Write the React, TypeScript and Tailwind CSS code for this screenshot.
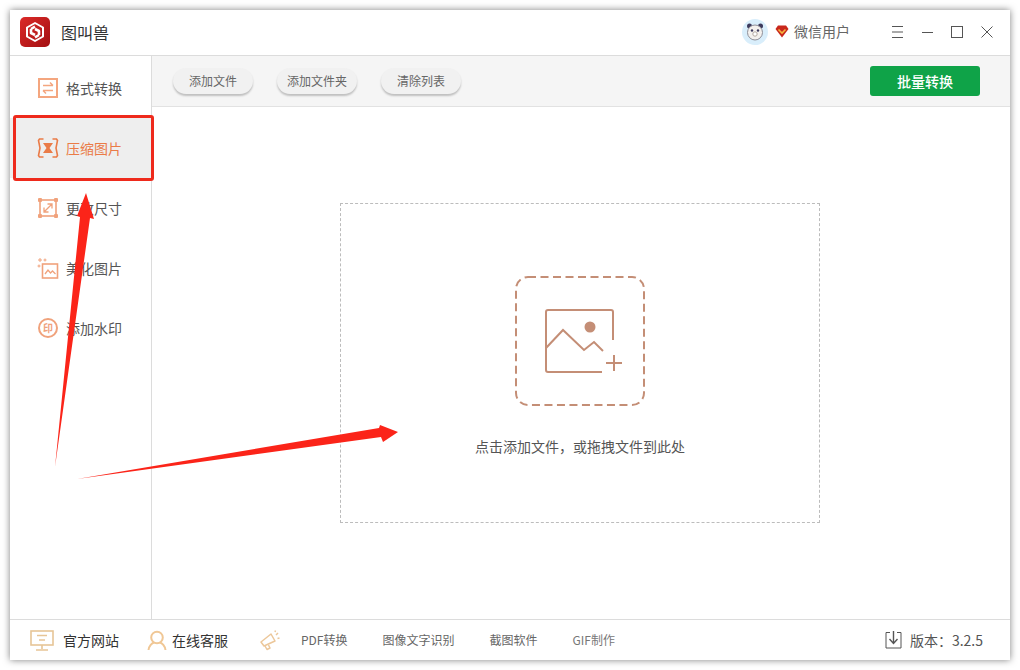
import React from "react";

const cjk = "font-['Noto_Sans_CJK_SC','Noto_Sans',sans-serif]";

function SwapIcon() {
  return (
    <svg width="22" height="22" viewBox="0 0 22 22" fill="none" stroke="#f4a67f" strokeWidth="2">
      <rect x="2" y="2" width="18" height="18" />
      <path d="M6 8.5h10M13 5.5l3 3M16 13.5H6M9 16.5l-3-3" strokeWidth="1.5" />
    </svg>
  );
}
function CompressIcon() {
  return (
    <svg width="22" height="22" viewBox="0 0 22 22" fill="none" stroke="#ea7b47" strokeWidth="1.6">
      <path d="M6.5 2H2.5L1.5 3.5 3 11 1.5 18.5l1 1.5h4M15.5 2h4l1 1.5L19 11l1.5 7.5-1 1.5h-4" />
      <path d="M6 6h10l-3.5 5L16 16H6l3.5-5z" fill="#ea7b47" stroke="none" />
    </svg>
  );
}
function ResizeIcon() {
  return (
    <svg width="22" height="22" viewBox="0 0 22 22" fill="none" stroke="#f0a27c" strokeWidth="1.6">
      <rect x="3" y="3" width="16" height="16" />
      <path d="M7 15l8-8M10.5 7H15v4.5M7 10.5V15h4.5" strokeWidth="1.3" />
      <g fill="#f0a27c" stroke="none">
        <rect x="1" y="1" width="4" height="4" rx="1" />
        <rect x="17" y="1" width="4" height="4" rx="1" />
        <rect x="1" y="17" width="4" height="4" rx="1" />
        <rect x="17" y="17" width="4" height="4" rx="1" />
      </g>
    </svg>
  );
}
function BeautifyIcon() {
  return (
    <svg width="22" height="22" viewBox="0 0 22 22" fill="none" stroke="#f0a27c" strokeWidth="1.3">
      <rect x="5.5" y="7" width="15" height="14" strokeWidth="1.6" />
      <path d="M8 17l3-4 2.5 3 2-2 3 3" />
      <path d="M3 1v4M1 3h4M8 1.5v3M6.5 3h3M2 7.5v3M.5 9h3" strokeWidth="1" />
    </svg>
  );
}
function WatermarkIcon() {
  return (
    <span className="flex h-[20px] w-[20px] items-center justify-center rounded-full border-2 border-[#f0a27c] text-[10px] font-bold leading-none text-[#f0a27c]">
      印
    </span>
  );
}

const side = [
  { label: "格式转换", icon: <SwapIcon /> },
  { label: "压缩图片", icon: <CompressIcon />, active: true },
  { label: "更改尺寸", icon: <ResizeIcon /> },
  { label: "美化图片", icon: <BeautifyIcon /> },
  { label: "添加水印", icon: <WatermarkIcon /> },
];

function Logo() {
  return (
    <div className="flex h-[30px] w-[30px] items-center justify-center rounded-[5px] bg-gradient-to-br from-[#dc2a28] to-[#a30f12]">
      <svg width="22" height="22" viewBox="0 0 22 22" fill="none" stroke="#fff" strokeWidth="2.6" strokeLinejoin="round">
        <path d="M11 2l8 4.5v9L11 20l-8-4.5v-9z" strokeWidth="2" />
        <path d="M7 8l4-2.4M15 14l-4 2.4M7 8v4l4 2M15 14v-4l-4-2" />
      </svg>
    </div>
  );
}

function Panda() {
  return (
    <svg width="26" height="26" viewBox="0 0 26 26">
      <circle cx="13" cy="13" r="13" fill="#d9eefb" />
      <circle cx="7.5" cy="7" r="2.5" fill="#3d3a5c" />
      <circle cx="18.5" cy="7" r="2.5" fill="#3d3a5c" />
      <circle cx="13" cy="13.5" r="7.5" fill="#f4f1ee" stroke="#8f8f98" strokeWidth="1" />
      <circle cx="10" cy="11.5" r="1.2" fill="#3d3a5c" />
      <circle cx="16" cy="11.5" r="1.2" fill="#3d3a5c" />
      <circle cx="13" cy="15" r="2.2" fill="#fff" stroke="#b5a9a0" strokeWidth="1" />
    </svg>
  );
}

function Diamond() {
  return (
    <svg width="14" height="13" viewBox="0 0 14 13">
      <path d="M3 .5h8L13.5 4 7 12.5.5 4z" fill="#c9281c" />
      <path d="M3.5 4.5L7 8l3.5-3.5" fill="none" stroke="#f6b73c" strokeWidth="1.6" />
    </svg>
  );
}

function WindowControls() {
  return (
    <div className="ml-[41px] flex items-center">
      <svg width="13" height="12" viewBox="0 0 13 12" stroke="#555" strokeWidth="1">
        <path d="M1 .5h11M1 6h11M1 11.5h11" />
      </svg>
      <svg className="ml-[17px]" width="13" height="12" viewBox="0 0 13 12" stroke="#555" strokeWidth="1">
        <path d="M1 6.5h11" />
      </svg>
      <svg className="ml-[17px]" width="12" height="12" viewBox="0 0 12 12" fill="none" stroke="#555" strokeWidth="1">
        <rect x=".5" y=".5" width="11" height="11" />
      </svg>
      <svg className="ml-[18px]" width="12" height="12" viewBox="0 0 12 12" stroke="#555" strokeWidth="1">
        <path d="M.5.5l11 11M11.5.5l-11 11" />
      </svg>
    </div>
  );
}

function ToolButton({ children }: { children: React.ReactNode }) {
  return (
    <div className="flex h-[26px] w-[80px] items-center justify-center rounded-full bg-[#f1f1f1] text-[12px] text-[#666] shadow-[0_2px_2px_rgba(0,0,0,0.22)]">
      {children}
    </div>
  );
}

function AddImage() {
  return (
    <svg width="130" height="130" viewBox="0 0 130 130" fill="none" stroke="#c48e76" strokeWidth="2">
      <rect x="1" y="1" width="128" height="128" rx="12" strokeDasharray="8 4.5" />
      <path d="M87 67H98V36a2 2 0 0 0-2-2H33a2 2 0 0 0-2 2v58a2 2 0 0 0 2 2h55" stroke="none" />
      <path d="M98 64V36a2 2 0 0 0-2-2H33a2 2 0 0 0-2 2v58a2 2 0 0 0 2 2h54" />
      <path d="M31 72l17-18 21 20 10-8 9 9" />
      <circle cx="75" cy="51" r="5.5" fill="#c48e76" stroke="none" />
      <path d="M91 87h16M99 79v16" />
    </svg>
  );
}

function Monitor() {
  return (
    <svg width="24" height="21" viewBox="0 0 24 21" fill="none" stroke="#e7c596" strokeWidth="1.6">
      <rect x="1" y="1" width="22" height="14" />
      <path d="M7 5.5h10M9 10h6M12 15v4M6 20h12" />
    </svg>
  );
}
function User() {
  return (
    <svg width="20" height="21" viewBox="0 0 20 21" fill="none" stroke="#f0c795" strokeWidth="2">
      <circle cx="10" cy="7.5" r="5.8" />
      <path d="M1.5 20c.5-4 3.5-7 5.5-7.5M18.5 20c-.5-4-3.5-7-5.5-7.5" />
    </svg>
  );
}
function Megaphone() {
  return (
    <svg width="20" height="21" viewBox="0 0 20 21" fill="none" stroke="#ecc79a" strokeWidth="1.5" strokeLinejoin="round">
      <path d="M1 12l10-8 4 7-11 5z" />
      <path d="M5 16l2 3.5 3-1.5-1.5-3" />
      <path d="M16 5l2-2M15 2l.5-1.5M17.5 8.5l2-.5" />
    </svg>
  );
}
function Download() {
  return (
    <svg width="17" height="18" viewBox="0 0 17 18" fill="none" stroke="#555" strokeWidth="1">
      <path d="M5 1.5H1v15.5h15V1.5h-4" />
      <path d="M8.5 0v12M4.5 8l4 4.5 4-4.5" strokeWidth="1.4" />
    </svg>
  );
}

export default function App() {
  return (
    <div className={`relative h-[670px] w-[1020px] overflow-hidden bg-white p-[10px] ${cjk}`}>
      <div className="flex h-[650px] w-[1000px] flex-col bg-white shadow-[0_0_7px_rgba(0,0,0,0.5)]">
        {/* Title bar */}
        <header className="flex h-[46px] shrink-0 items-center border-b border-[#dcdcdc] pb-[2px] pl-[10px] pr-[17px]">
          <Logo />
          <span className="ml-[11px] text-[16px] text-[#333]">图叫兽</span>
          <div className="ml-auto flex items-center">
            <Panda />
            <span className="ml-[7px]"><Diamond /></span>
            <span className="ml-[5px] text-[14px] text-[#666]">微信用户</span>
            <WindowControls />
          </div>
        </header>

        <div className="flex min-h-0 flex-1">
          {/* Sidebar */}
          <aside className="w-[142px] shrink-0 border-r border-[#dcdcdc] pt-[2px]">
            {side.map((s) => (
              <div
                key={s.label}
                className={`flex h-[60px] items-center gap-[7px] pl-[27px] text-[14px] ${
                  s.active ? "bg-[#eeeeee] text-[#ea7b47]" : "text-[#555]"
                }`}
              >
                <span className="flex h-[22px] w-[22px] items-center justify-center">{s.icon}</span>
                <span>{s.label}</span>
              </div>
            ))}
          </aside>

          {/* Main */}
          <main className="flex min-w-0 flex-1 flex-col">
            <div className="flex h-[51px] shrink-0 items-center gap-[24px] border-b border-[#e2e2e2] bg-[#f5f5f5] pl-[21px] pr-[30px]">
              <ToolButton>添加文件</ToolButton>
              <ToolButton>添加文件夹</ToolButton>
              <ToolButton>清除列表</ToolButton>
              <div className="ml-auto flex h-[30px] w-[110px] items-center justify-center rounded-[3px] bg-[#0fa348] text-[14px] font-medium text-white">
                批量转换
              </div>
            </div>
            <div className="flex flex-1 items-center justify-center pr-[2px]">
              <div className="flex h-[320px] w-[480px] flex-col items-center border border-dashed border-[#bcbcbc] pt-[72px]">
                <AddImage />
                <span className="mt-[30px] text-[14px] leading-[20px] text-[#555]">点击添加文件，或拖拽文件到此处</span>
              </div>
            </div>
          </main>
        </div>

        {/* Footer */}
        <footer className="flex h-[41px] shrink-0 items-center border-t border-[#dcdcdc] pl-[20px] pr-[27px]">
          <Monitor />
          <span className="ml-[9px] text-[14px] text-[#333]">官方网站</span>
          <span className="ml-[28px]"><User /></span>
          <span className="ml-[5px] text-[14px] text-[#333]">在线客服</span>
          <span className="ml-[32px]"><Megaphone /></span>
          <span className="ml-[21px] text-[12px] text-[#666]">PDF转换</span>
          <span className="ml-[35px] text-[12px] text-[#666]">图像文字识别</span>
          <span className="ml-[35px] text-[12px] text-[#666]">截图软件</span>
          <span className="ml-[35px] text-[12px] text-[#777]">GIF制作</span>
          <span className="ml-auto"><Download /></span>
          <span className="ml-[8px] text-[14px] text-[#555]">版本：3.2.5</span>
        </footer>
      </div>

      {/* Annotation overlay */}
      <div className="pointer-events-none absolute left-[13px] top-[115px] h-[66px] w-[141px] rounded-[3px] border-[3px] border-[#ee2a1c]" />
      <svg className="pointer-events-none absolute left-0 top-0" width="1020" height="670" viewBox="0 0 1020 670">
        <polygon points="55,467 80,217 77,216 86,193 94,219 90,218" fill="#fb2419" />
        <polygon points="77,479 379,428 380,425 398,432 383,442 381,437" fill="#fb2419" />
      </svg>
    </div>
  );
}
